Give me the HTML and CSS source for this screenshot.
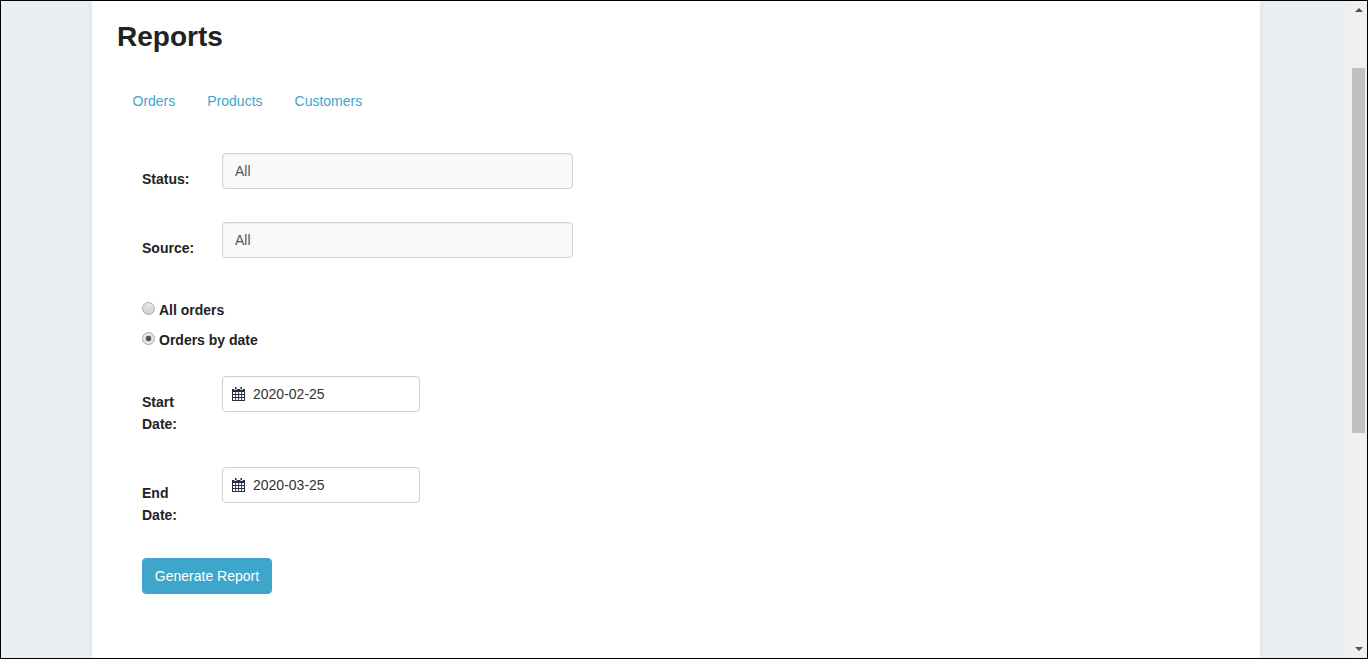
FILE: index.html
```html
<!DOCTYPE html>
<html lang="en">
<head>
<meta charset="utf-8">
<title>Reports</title>
<link rel="stylesheet" href="styles.css">
</head>
<body>
<div class="frame">
  <div class="viewport">
    <main class="panel">
      <h1 class="title">Reports</h1>
      <nav class="tabs">
        <a class="tab" href="#">Orders</a>
        <a class="tab" href="#">Products</a>
        <a class="tab" href="#">Customers</a>
      </nav>
      <form class="form">
        <div class="row row-select">
          <label class="label">Status:</label>
          <select class="select"><option>All</option></select>
        </div>
        <div class="row row-select">
          <label class="label">Source:</label>
          <select class="select"><option>All</option></select>
        </div>
        <div class="radios">
          <label class="radio"><input type="radio" name="scope"><span>All orders</span></label>
          <label class="radio"><input type="radio" name="scope" checked><span>Orders by date</span></label>
        </div>
        <div class="row row-date">
          <label class="label label-date">Start Date:</label>
          <div class="date">
            <svg class="cal" viewBox="0 0 13 14" aria-hidden="true"><path fill="#2b2b44" fill-rule="evenodd" d="M3 0h1.500v2.200H3zM8.500 0H10v2.200H8.500zM0 2h2.300v1H4.800V2h3.400v1h2.500V2H13v12H0zM1 5v2h2.200V5zm3.100 0v2h2.100V5zm3 0v2h2.100V5zm3 0v2H12V5zM1 7.900V10h2.200V7.900zm3.100 0V10h2.100V7.900zm3 0V10h2.100V7.900zm3 0V10H12V7.900zM1 10.900V13h2.200v-2.100zm3.100 0V13h2.100v-2.100zm3 0V13h2.100v-2.100zm3 0V13H12v-2.100z"/></svg>
            <span>2020-02-25</span>
          </div>
        </div>
        <div class="row row-date">
          <label class="label label-date">End Date:</label>
          <div class="date">
            <svg class="cal" viewBox="0 0 13 14" aria-hidden="true"><path fill="#2b2b44" fill-rule="evenodd" d="M3 0h1.500v2.200H3zM8.500 0H10v2.200H8.500zM0 2h2.300v1H4.800V2h3.400v1h2.500V2H13v12H0zM1 5v2h2.200V5zm3.100 0v2h2.100V5zm3 0v2h2.100V5zm3 0v2H12V5zM1 7.900V10h2.200V7.900zm3.100 0V10h2.100V7.900zm3 0V10h2.100V7.900zm3 0V10H12V7.900zM1 10.900V13h2.200v-2.100zm3.100 0V13h2.100v-2.100zm3 0V13h2.100v-2.100zm3 0V13H12v-2.100z"/></svg>
            <span>2020-03-25</span>
          </div>
        </div>
        <button class="btn" type="button">Generate Report</button>
      </form>
    </main>
  </div>
  <div class="scrollbar">
    <span class="arrow arrow-up"></span>
    <div class="track"><div class="thumb"></div></div>
    <span class="arrow arrow-down"></span>
  </div>
</div>
</body>
</html>
```

FILE: styles.css
```css
* { box-sizing: border-box; }
html, body { margin: 0; height: 100%; overflow: hidden; }
body { font-family: "Liberation Sans", Arial, sans-serif; font-size: 14px; color: #222; background: #fff; }

.frame { display: flex; width: 1368px; height: 659px; border: 1px solid #000; }
.viewport { flex: 1; min-width: 0; background: #ebeff2; padding-left: 91px; overflow: hidden; }
.panel { width: 1168px; height: 100%; background: #fff; box-shadow: 0 0 6px rgba(0, 0, 0, 0.07); padding: 19px 0 0 25px; }

.title { margin: 0; font-size: 28px; line-height: 34px; font-weight: 700; color: #222; }

.tabs { display: flex; gap: 32px; margin-top: 37px; padding-left: 15.5px; }
.tab { color: #3ea6cb; text-decoration: none; line-height: 20px; }

.form { padding-left: 25px; margin-top: 42px; }
.row { display: flex; }
.row-select { height: 36px; margin-bottom: 33px; }
.row-date { height: 36px; margin-bottom: 55px; }
.label { width: 80px; font-weight: 700; line-height: 20px; padding-top: 16px; color: #222; }
.label-date { padding: 15px 30px 0 0; line-height: 22px; }

.select { appearance: none; -webkit-appearance: none; width: 351px; height: 36px; border: 1px solid #cdd0d5; border-radius: 4px; background: #f9f9f9; padding: 0 12px; font: 14px "Liberation Sans", Arial, sans-serif; color: #555; box-shadow: inset 0 1px 2px rgba(0, 0, 0, 0.05); }

.radios { display: flex; flex-direction: column; gap: 10px; margin-top: 42px; margin-bottom: 26px; }
.radio { display: flex; align-items: center; height: 20px; font-weight: 700; color: #222; }
.radio input { appearance: none; -webkit-appearance: none; width: 13px; height: 13px; margin: -3px 4px 0 0; border: 1px solid #a9a9a9; border-radius: 50%; background: linear-gradient(#e8e8e8, #cfcfcf); }
.radio input:checked { background: radial-gradient(circle, #555 0, #555 2.5px, #e6e6e6 3.2px); }

.date { display: flex; align-items: center; gap: 8px; width: 198px; height: 36px; padding-left: 9px; border: 1px solid #cdd0d5; border-radius: 4px; background: #fff; color: #333; box-shadow: inset 0 1px 2px rgba(0, 0, 0, 0.04); }
.cal { width: 13px; height: 14px; flex: none; }

.btn { display: block; width: 130px; height: 36px; padding: 0; border: 1px solid #3ea6cb; border-radius: 4px; background: #3ea6cb; color: #fff; font: 14px "Liberation Sans", Arial, sans-serif; }

.scrollbar { flex: none; width: 17px; background: #f0f0f0; display: flex; flex-direction: column; align-items: center; }
.arrow { flex: none; width: 0; height: 0; border-left: 4px solid transparent; border-right: 4px solid transparent; }
.arrow-up { margin: 7px 0 6px; border-bottom: 4px solid #505050; }
.arrow-down { margin: 6px 0 7px; border-top: 4px solid #505050; }
.track { flex: 1; width: 100%; padding: 50px 2px 208px; }
.thumb { height: 100%; background: #c1c1c1; }
```
